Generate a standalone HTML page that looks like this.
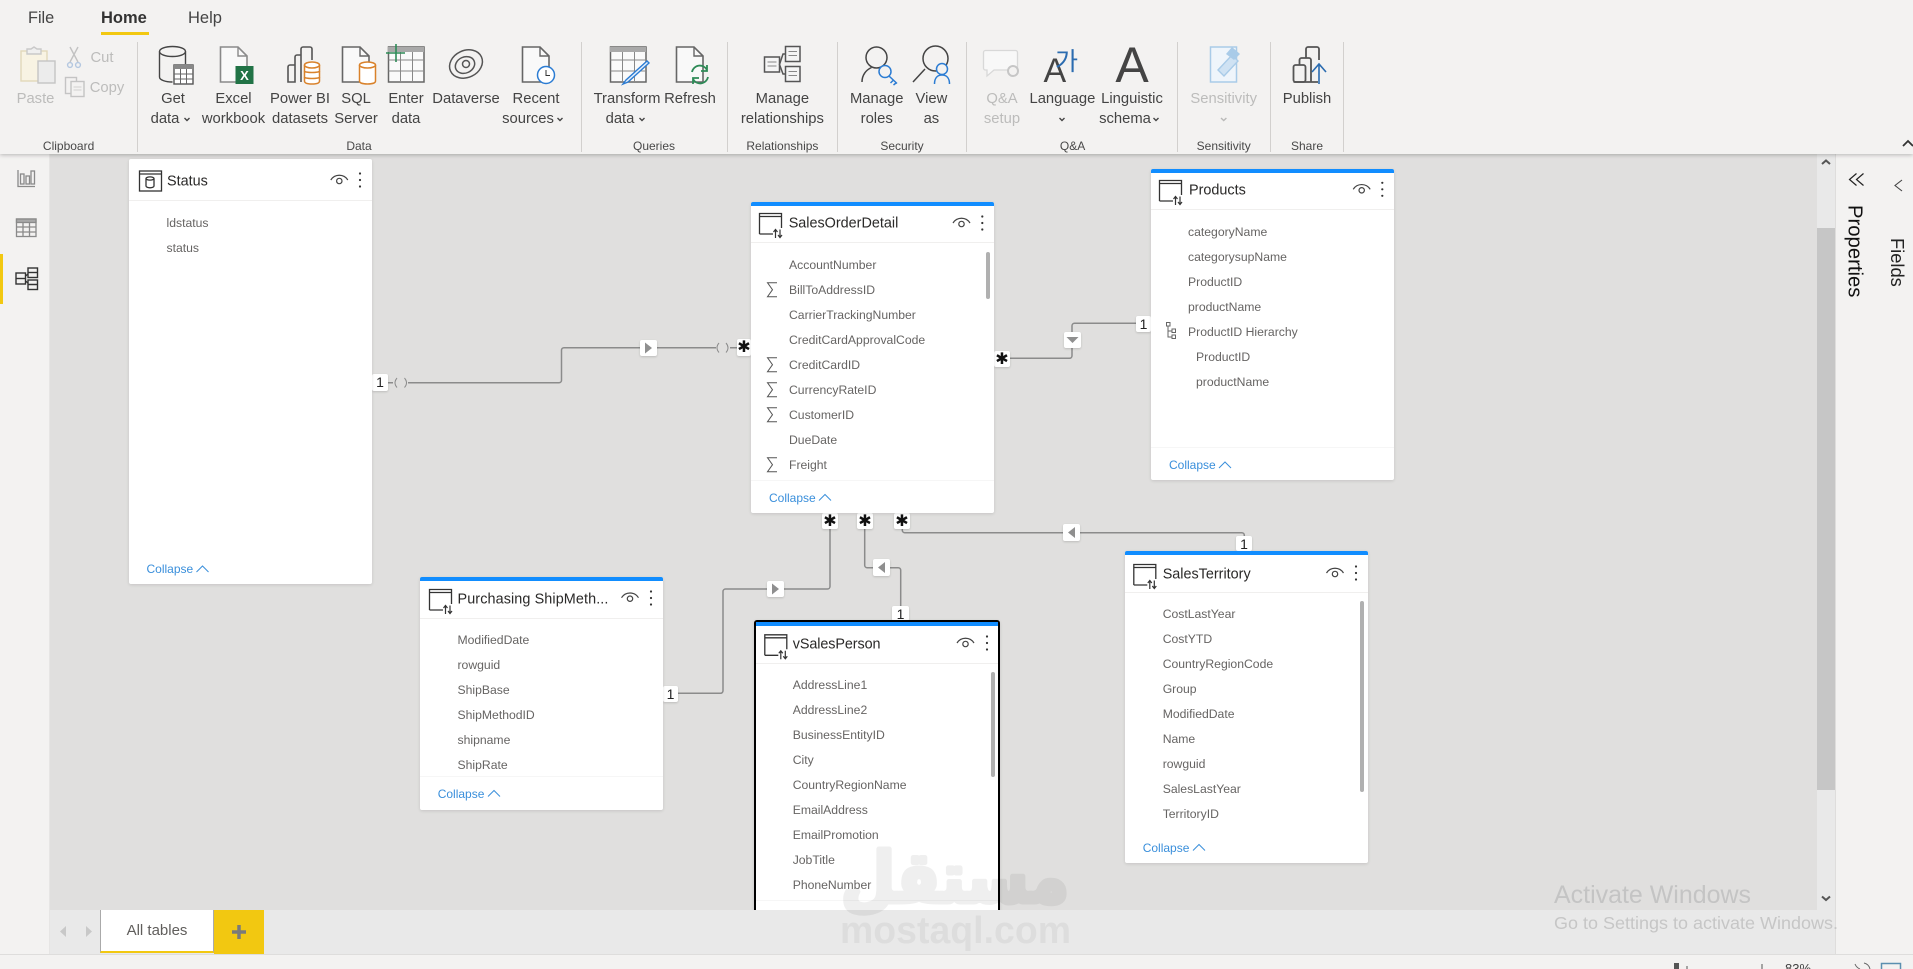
<!DOCTYPE html>
<html><head><meta charset="utf-8"><title>Power BI Model View</title>
<style>
html,body{margin:0;padding:0}
body{width:1913px;height:969px;overflow:hidden;position:relative;background:#f3f2f1;font-family:"Liberation Sans","Noto Sans CJK SC",sans-serif}
.abs,.l,.g,.t,.c,.r,.col,.ti,.b,.hr{position:absolute}
.l{transform:translate(-50%,1px);white-space:nowrap;font-size:14.8px;line-height:18px;color:#444}
.l.dis{color:#bcbcbb}
.g{transform:translateX(-50%);white-space:nowrap;font-size:12px;line-height:16px;top:137.5px;color:#484848}
.t{top:8px;font-size:16.3px;line-height:20px;color:#444}
.c{background:#fff;border-radius:2px;box-shadow:0 1px 3px rgba(0,0,0,.12);z-index:3}
.bt{position:absolute;left:0;right:0;top:0;height:4px;background:#118dff;border-radius:2px 2px 0 0}
.r{font-size:12.2px;line-height:25px;color:#666463;white-space:nowrap;z-index:4;transform:translateY(1px)}
.ti{font-size:14.4px;line-height:20px;color:#2a2928;white-space:nowrap;z-index:4;transform:translateY(.5px)}
.col{font-size:12px;line-height:16px;color:#3a8fdb;z-index:4}
.hr{height:1px;background:#f0efee;z-index:4}
.hr.ft{background:#f6f6f6}
.b{background:#fff;border-radius:2px;box-shadow:0 1px 2px rgba(0,0,0,.16);z-index:2;text-align:center;color:#222;font-size:14px;line-height:16px}
.s{font-family:"DejaVu Sans",sans-serif;font-size:16px;line-height:16px;color:#111}
svg{position:absolute;left:0;top:0;overflow:visible}
</style></head>
<body>
<!-- canvas -->
<div class="abs" style="left:50px;top:154px;width:1767px;height:756px;background:#e0dfde;z-index:1"></div>
<!-- ribbon -->
<div class="abs" style="left:0;top:0;width:1913px;height:154px;background:#f3f2f1;box-shadow:0 1px 4px rgba(0,0,0,.25);z-index:6">
<div class="t" style="left:28px">File</div>
<div class="t" style="left:101px;font-weight:bold;font-size:16.5px;color:#333">Home</div>
<div class="abs" style="left:101px;top:32px;width:48px;height:3px;background:#f2c811"></div>
<div class="t" style="left:188px;font-size:16.5px">Help</div>

<div class="l dis" style="left:35.5px;top:89px">Paste</div>
<div class="l dis" style="left:102px;top:48px">Cut</div>
<div class="l dis" style="left:107px;top:78px">Copy</div>
<div class="l" style="left:173px;top:89px">Get</div><div class="l" style="left:165px;top:109px">data</div>
<div class="l" style="left:233.5px;top:89px">Excel</div><div class="l" style="left:233.5px;top:109px">workbook</div>
<div class="l" style="left:300px;top:89px">Power BI</div><div class="l" style="left:300px;top:109px">datasets</div>
<div class="l" style="left:356px;top:89px">SQL</div><div class="l" style="left:356px;top:109px">Server</div>
<div class="l" style="left:406px;top:89px">Enter</div><div class="l" style="left:406px;top:109px">data</div>
<div class="l" style="left:466px;top:89px">Dataverse</div>
<div class="l" style="left:536px;top:89px">Recent</div><div class="l" style="left:528px;top:109px">sources</div>
<div class="l" style="left:627px;top:89px">Transform</div><div class="l" style="left:620px;top:109px">data</div>
<div class="l" style="left:690px;top:89px">Refresh</div>
<div class="l" style="left:782.4px;top:89px">Manage</div><div class="l" style="left:782.4px;top:109px">relationships</div>
<div class="l" style="left:876.7px;top:89px">Manage</div><div class="l" style="left:876.7px;top:109px">roles</div>
<div class="l" style="left:931.4px;top:89px">View</div><div class="l" style="left:931.4px;top:109px">as</div>
<div class="l dis" style="left:1002px;top:89px">Q&amp;A</div><div class="l dis" style="left:1002px;top:109px">setup</div>
<div class="l" style="left:1062.4px;top:89px">Language</div>
<div class="l" style="left:1132px;top:89px">Linguistic</div><div class="l" style="left:1125px;top:109px">schema</div>
<div class="l dis" style="left:1223.7px;top:89px">Sensitivity</div>
<div class="l" style="left:1307px;top:89px">Publish</div>

<div class="g" style="left:68.6px">Clipboard</div>
<div class="g" style="left:359px">Data</div>
<div class="g" style="left:654px">Queries</div>
<div class="g" style="left:782.4px">Relationships</div>
<div class="g" style="left:902px">Security</div>
<div class="g" style="left:1072.6px">Q&amp;A</div>
<div class="g" style="left:1223.7px">Sensitivity</div>
<div class="g" style="left:1307px">Share</div>

<svg width="1913" height="154" fill="none" stroke-width="1.4">
<!-- separators -->
<g stroke="#d2d0ce" stroke-width="1"><path d="M137.5 42V152M581.5 42V152M727.5 42V152M837.5 42V152M966.5 42V152M1177.5 42V152M1270.5 42V152M1343.5 42V152"/></g>
<!-- paste -->
<rect x="21" y="51" width="26" height="30" fill="#f8f3e3" stroke="#e2d8ba"/><path d="M27 52V49H31L34 47L37 49H41V54H27Z" fill="#efefef" stroke="#c9c9c9"/>
<rect x="38" y="61" width="17" height="22" fill="#ececec" stroke="#c4c4c4"/>
<path d="M70 47L78 62M78 47L70 62" stroke="#c2c2c2"/><circle cx="70" cy="65" r="2.4" stroke="#b4c7e0"/><circle cx="78" cy="65" r="2.4" stroke="#b4c7e0"/>
<rect x="65.5" y="77.5" width="11" height="16" stroke="#c4c4c4"/><rect x="71" y="81.5" width="13" height="15" fill="#f3f2f1" stroke="#c4c4c4"/><path d="M73.5 87H81.5M73.5 90H81.5" stroke="#d0d0d0" stroke-width="1"/>
<!-- get data -->
<g stroke="#444"><ellipse cx="172.5" cy="51.5" rx="13" ry="5"/><path d="M159.5 51.5V77c0 3 6 5 13 5M185.5 51.5V64"/></g>
<rect x="174" y="65" width="19" height="19" fill="#fff" stroke="#555"/><rect x="174" y="65" width="19" height="4" fill="#888"/><path d="M180.5 69V84M186.5 69V84M174 74H193M174 79H193" stroke="#666" stroke-width="1"/>
<!-- excel -->
<path d="M220.5 47H238L247 56V82H220.5Z" fill="#f9f9f9" stroke="#8a8a8a" stroke-width="1.6"/><path d="M238 47V56H247" stroke="#8a8a8a"/>
<rect x="235.5" y="66" width="18" height="18" fill="#217346"/><text x="244.5" y="80" text-anchor="middle" font-size="13" font-weight="bold" fill="#fff" stroke="none" font-family="Liberation Sans">X</text>
<!-- power bi datasets -->
<g stroke="#555" stroke-width="1.6"><path d="M288 82V67a2 2 0 0 1 2-2H295V82ZM295 82V57a2 2 0 0 1 2-2H301M301 82V49a2 2 0 0 1 2-2H310a2 2 0 0 1 2 2V60"/></g>
<g stroke="#d9822b" stroke-width="1.5" fill="#fff"><path d="M304.5 65V81c0 2 3 3 7.5 3s7.5-1 7.5-3V65"/><ellipse cx="312" cy="65" rx="7.5" ry="3"/><path d="M304.5 71c0 2 15 2 15 0M304.5 77c0 2 15 2 15 0" fill="none"/></g>
<!-- SQL -->
<path d="M342.5 47H360L369 56V82H342.5Z" fill="#f9f9f9" stroke="#666" stroke-width="1.6"/><path d="M360 47V56H369" stroke="#666"/>
<g stroke="#d9822b" stroke-width="1.5" fill="#fff"><path d="M359.5 65V81c0 2 3.500 3 8 3s8-1 8-3V65"/><ellipse cx="367.500" cy="65" rx="8" ry="3"/></g>
<!-- enter data -->
<rect x="388.500" y="47" width="35.500" height="35" fill="#fafafa" stroke="#666" stroke-width="1.500"/><rect x="388" y="47" width="36" height="5" fill="#a9a9a9"/><path d="M400.500 52V82M412.500 52V82M388.500 60H424M388.500 71H424" stroke="#888" stroke-width="1"/>
<path d="M386 53H405M396 44V62" stroke="#2e8b57" stroke-width="1.600"/>
<!-- dataverse -->
<g stroke="#555" stroke-width="1.500"><ellipse cx="466" cy="64" rx="17" ry="13.500" transform="rotate(-25 466 64)"/><ellipse cx="465" cy="65" rx="10" ry="8" transform="rotate(-25 465 65)"/><circle cx="466" cy="64" r="3.500"/></g>
<!-- recent -->
<path d="M522.500 47H540L549 56V82H522.500Z" fill="#f9f9f9" stroke="#666" stroke-width="1.600"/><path d="M540 47V56H549" stroke="#666"/>
<circle cx="546" cy="75" r="8.500" fill="#fff" stroke="#2b7cd3" stroke-width="1.500"/><path d="M546 70V75.500H550" stroke="#333" stroke-width="1"/>
<!-- transform -->
<rect x="610.500" y="47" width="35.500" height="35" fill="#fafafa" stroke="#666" stroke-width="1.500"/><rect x="610" y="47" width="36" height="5" fill="#a9a9a9"/><path d="M622.500 52V82M634.500 52V82M610.500 60H646M610.500 71H646" stroke="#888" stroke-width="1"/>
<path d="M647 61L626 80L623 84L628 82L649 63Z" fill="#e4effb" stroke="#2b7cd3" stroke-width="1.400"/>
<!-- refresh -->
<path d="M676.500 47H694L703 56V82H676.500Z" fill="#f9f9f9" stroke="#666" stroke-width="1.600"/><path d="M694 47V56H703" stroke="#666"/>
<g stroke="#2e8b57" stroke-width="1.800"><path d="M692 72A8 8 0 0 1 707 70M707 65V71H701M708 77A8 8 0 0 1 693 79M693 84V78H699"/></g>
<!-- manage relationships -->
<g stroke="#555" stroke-width="1.500" fill="#f5f5f5"><rect x="764.500" y="57" width="15" height="15"/><rect x="785.500" y="46.500" width="14.500" height="15"/><rect x="785.500" y="66.500" width="14.500" height="15"/></g>
<path d="M785 54H783L779.500 64.500L783 74H785" stroke="#555" stroke-width="1.500"/>
<path d="M767.500 62H776.500M767.500 66H776.500M788.500 51.500H797M788.500 55.500H797M788.500 71.500H797M788.500 75.500H797" stroke="#888" stroke-width="1"/>
<!-- manage roles -->
<g stroke="#444" stroke-width="1.500"><circle cx="876.500" cy="57.500" r="10.500"/><path d="M862 82C862 75 866 70 871.500 67.500M882 67L885 66"/></g>
<g stroke="#2b7cd3" stroke-width="1.500" fill="#f3f2f1"><circle cx="885" cy="71.500" r="6"/><path d="M889 76L897 83.500M893.500 80L890.500 83M896 83L893.500 85" fill="none"/></g>
<!-- view as -->
<g stroke="#444" stroke-width="1.500"><circle cx="935.500" cy="58.500" r="12.500"/><path d="M925 69L913 82"/></g>
<g stroke="#2b7cd3" stroke-width="1.500" fill="#f3f2f1"><circle cx="942" cy="69" r="5.500"/><path d="M934.500 84c0-6 3-9 7.500-9s7.500 3 7.500 9" fill="none"/></g>
<!-- q&a -->
<path d="M985.500 50.500H1015.500a2 2 0 0 1 2 2V70H994L987 76V70H985.500a2 2 0 0 1-2-2V52.500a2 2 0 0 1 2-2Z" fill="#f8f8f8" stroke="#d8d8d8" stroke-width="1.300"/>
<circle cx="1013" cy="71" r="5" fill="#f3f2f1" stroke="#c6c6c6" stroke-width="2"/>
<!-- language / linguistic -->
<text x="1043.500" y="82" font-size="34" fill="#444" stroke="none" font-family="Liberation Sans">A</text>
<text x="1055" y="70" font-size="25" fill="#2b6cb0" stroke="none" font-family="Noto Sans CJK KR">가</text>
<text x="1132" y="82" text-anchor="middle" font-size="50" fill="#444" stroke="none" font-family="Liberation Sans">A</text>
<!-- sensitivity -->
<rect x="1210.500" y="47" width="26" height="35" fill="#eff5fb" stroke="#a9cbe8" stroke-width="1.500"/>
<path d="M1218 70L1232 55L1238 61L1224 76Z" fill="#cfe2f3" stroke="#a9cbe8"/><path d="M1226 54L1232 47L1240 54L1234 60Z" fill="#a9cbe8"/>
<!-- publish -->
<g stroke="#555" stroke-width="1.800"><rect x="1293.500" y="65" width="12" height="17" rx="2"/><path d="M1299.500 65V60a2 2 0 0 1 2-2H1309a2 2 0 0 1 2 2V82M1306 58V49a2 2 0 0 1 2-2H1317a2 2 0 0 1 2 2V60M1293.500 82H1318"/></g>
<path d="M1319 84V64M1312 72L1319 64L1326 72" stroke="#2b6cb0" stroke-width="1.600"/>
<!-- carets -->
<g stroke="#444" stroke-width="1.400"><path d="M184.500 118L187 120.500L189.500 118M557.500 118L560 120.500L562.500 118M639.500 118L642 120.500L644.500 118M1059.500 118L1062 120.500L1064.500 118M1153.500 118L1156 120.500L1158.500 118"/></g>
<path d="M1221 118L1223.700 120.500L1226.400 118" stroke="#b9b9b8" stroke-width="1.400"/>
<path d="M1903 146L1908 141L1913 146" stroke="#333" stroke-width="1.800"/>
</svg>
</div>

<!-- left rail -->
<div class="abs" style="left:0;top:154px;width:50px;height:815px;background:#f3f2f1;border-right:1px solid #e6e5e4;box-sizing:border-box;z-index:1"></div>
<div class="abs" style="left:0;top:254px;width:3px;height:50px;background:#f2c811;z-index:2"></div>
<svg width="60" height="320" fill="none" style="z-index:2">
<g stroke="#8a8a8a" stroke-width="1.300"><path d="M18 170V186.500H35"/><rect x="20.500" y="174" width="3.500" height="10"/><rect x="26" y="176" width="3.500" height="8"/><rect x="31" y="171" width="3.500" height="13"/></g>
<g stroke="#8a8a8a" stroke-width="1.300"><rect x="16.500" y="219" width="19.500" height="17.500"/><rect x="16.500" y="219" width="19.500" height="3.500" fill="#a8a8a8"/><path d="M23 222V236M29.500 222V236M16.500 227H36M16.500 232H36"/></g>
<g stroke="#333" stroke-width="1.400"><rect x="16" y="273" width="9.500" height="11"/><path d="M16 278.500H25.500"/><rect x="28" y="268" width="9.500" height="9.500"/><path d="M28 272.500H37.500"/><rect x="28" y="280" width="9.500" height="9.500"/><path d="M28 284.500H37.500M25.500 276L28 274M25.500 281L28 283"/></g>
</svg>

<!-- connectors -->
<svg width="1913" height="969" fill="none" style="z-index:2">
<g stroke="#8b8b8b" stroke-width="1.500">
<path d="M408 382.700H559a2.500 2.500 0 0 0 2.500-2.500V350.200a2.500 2.500 0 0 1 2.500-2.500H716"/>
<path d="M730 347.700H737M388 382.700H393"/>
<path d="M1010 358.300H1069.500a2.500 2.500 0 0 0 2.500-2.500V325.800a2.500 2.500 0 0 1 2.500-2.500H1136"/>
<path d="M830 529V586.500a2.500 2.500 0 0 1-2.500 2.500H725.500a2.500 2.500 0 0 0-2.500 2.500V690.800a2.500 2.500 0 0 1-2.500 2.500H678"/>
<path d="M864.700 529V565.200a2.500 2.500 0 0 0 2.500 2.500H898.200a2.500 2.500 0 0 1 2.500 2.500V606"/>
<path d="M902.300 529V530.200a2.500 2.500 0 0 0 2.500 2.500H1241.800a2.500 2.500 0 0 1 2.500 2.500V537"/>
</g>
<g stroke="#8b8b8b" stroke-width="1"><path d="M397 378Q393 382.700 397 387.500M404.500 378Q408.500 382.700 404.500 387.500M719 343Q715 347.700 719 352.500M726 343Q730 347.700 726 352.500"/></g>
</svg>
<div class="b" style="left:372px;top:374px;width:16px;height:17px">1</div>
<div class="b" style="left:1136px;top:316px;width:15px;height:16px">1</div>
<div class="b" style="left:663px;top:686px;width:15px;height:16px">1</div>
<div class="b" style="left:892px;top:606px;width:17px;height:15px">1</div>
<div class="b" style="left:1236px;top:536px;width:16px;height:15px">1</div>
<div class="b s" style="left:737px;top:339px;width:14px;height:17px">✱</div>
<div class="b s" style="left:994px;top:351px;width:16px;height:16px">✱</div>
<div class="b s" style="left:822px;top:513px;width:16px;height:16px">✱</div>
<div class="b s" style="left:857px;top:513px;width:16px;height:16px">✱</div>
<div class="b s" style="left:894px;top:513px;width:16px;height:16px">✱</div>
<div class="b" style="left:640px;top:340px;width:17px;height:16px"></div>
<div class="b" style="left:1064px;top:332px;width:17px;height:16px"></div>
<div class="b" style="left:767px;top:581px;width:17px;height:16px"></div>
<div class="b" style="left:873px;top:559px;width:17px;height:17px"></div>
<div class="b" style="left:1063px;top:524px;width:17px;height:17px"></div>
<svg width="1913" height="969" style="z-index:2">
<g fill="#8f8f8f"><path d="M645 342.500L652 348L645 353.500ZM1066.500 337H1078.500L1072.500 343ZM772 583.500L779 589L772 594.500ZM885 562L878 567.500L885 573ZM1075 527L1068 532.500L1075 538Z"/></g>
</svg>

<!-- Status -->
<div class="c" style="left:129px;top:159px;width:243px;height:425px"></div>
<div class="hr" style="left:129px;top:200px;width:243px"></div>
<div class="ti" style="left:167px;top:171px">Status</div>
<div class="r" style="left:166.500px;top:210px">ldstatus<br>status</div>
<div class="col" style="left:146.500px;top:561px">Collapse</div>

<!-- SalesOrderDetail -->
<div class="c" style="left:751px;top:202px;width:243px;height:311px"><div class="bt"></div></div>
<div class="hr" style="left:751px;top:242px;width:243px"></div>
<div class="hr ft" style="left:751px;top:480px;width:243px"></div>
<div class="ti" style="left:788.700px;top:213px">SalesOrderDetail</div>
<div class="r" style="left:789px;top:252px">AccountNumber<br>BillToAddressID<br>CarrierTrackingNumber<br>CreditCardApprovalCode<br>CreditCardID<br>CurrencyRateID<br>CustomerID<br>DueDate<br>Freight</div>
<div class="col" style="left:769px;top:490px">Collapse</div>
<div class="abs" style="left:986px;top:252px;width:4px;height:47px;background:#b0b0b0;border-radius:2px;z-index:4"></div>

<!-- Products -->
<div class="c" style="left:1151px;top:169px;width:243px;height:311px"><div class="bt"></div></div>
<div class="hr" style="left:1151px;top:209px;width:243px"></div>
<div class="hr ft" style="left:1151px;top:447px;width:243px"></div>
<div class="ti" style="left:1189px;top:179.500px">Products</div>
<div class="r" style="left:1188px;top:219px">categoryName<br>categorysupName<br>ProductID<br>productName<br>ProductID Hierarchy</div>
<div class="r" style="left:1196px;top:344px">ProductID<br>productName</div>
<div class="col" style="left:1169px;top:457px">Collapse</div>

<!-- Purchasing -->
<div class="c" style="left:420px;top:577px;width:243px;height:233px"><div class="bt"></div></div>
<div class="hr" style="left:420px;top:618px;width:243px"></div>
<div class="hr ft" style="left:420px;top:776px;width:243px"></div>
<div class="ti" style="left:457.500px;top:589px;letter-spacing:.1px">Purchasing ShipMeth...</div>
<div class="r" style="left:457.500px;top:627px">ModifiedDate<br>rowguid<br>ShipBase<br>ShipMethodID<br>shipname<br>ShipRate</div>
<div class="col" style="left:437.700px;top:786px">Collapse</div>

<!-- vSalesPerson -->
<div class="c" style="left:754px;top:620px;width:242px;height:320px;border:2px solid #000;border-bottom:0;border-radius:3px 3px 0 0"><div class="bt" style="border-radius:0"></div></div>
<div class="hr" style="left:756px;top:663px;width:242px"></div>
<div class="hr ft" style="left:756px;top:900px;width:242px"></div>
<div class="ti" style="left:792.800px;top:634px;letter-spacing:-.1px">vSalesPerson</div>
<div class="r" style="left:792.700px;top:672px">AddressLine1<br>AddressLine2<br>BusinessEntityID<br>City<br>CountryRegionName<br>EmailAddress<br>EmailPromotion<br>JobTitle<br>PhoneNumber</div>
<div class="abs" style="left:991px;top:672px;width:4px;height:105px;background:#b0b0b0;border-radius:2px;z-index:4"></div>

<!-- SalesTerritory -->
<div class="c" style="left:1125px;top:551px;width:243px;height:312px"><div class="bt"></div></div>
<div class="hr" style="left:1125px;top:592px;width:243px"></div>
<div class="ti" style="left:1162.700px;top:564px">SalesTerritory</div>
<div class="r" style="left:1162.700px;top:601px">CostLastYear<br>CostYTD<br>CountryRegionCode<br>Group<br>ModifiedDate<br>Name<br>rowguid<br>SalesLastYear<br>TerritoryID</div>
<div class="col" style="left:1142.700px;top:840px">Collapse</div>
<div class="abs" style="left:1360px;top:601px;width:4px;height:191px;background:#b0b0b0;border-radius:2px;z-index:4"></div>

<!-- card icons overlay -->
<svg width="1913" height="969" fill="none" style="z-index:4">
<defs>
<g id="tb" stroke="#333" stroke-width="1.300"><path d="M.5 21V.5H22.500V15M.5 3.500H22.500M.5 21H14"/><path d="M16.500 25V17M14.500 19L16.500 16.500L18.500 19M21 16.500V24.500M19 22L21 24.500L23 22" stroke-width="1.200"/></g>
<g id="eye" stroke="#444" stroke-width="1.200"><path d="M-8.500 0A10 10 0 0 1 8.500 0"/><circle cx="0" cy="1" r="2.700"/></g>
<g id="dots" fill="#333" stroke="none"><circle cx="0" cy="-6.500" r="1.100"/><circle cx="0" cy="0" r="1.100"/><circle cx="0" cy="6.500" r="1.100"/></g>
<path id="ch" d="M-6 3L0-3L6 3" stroke="#3a8fdb" stroke-width="1"/>
<path id="sig" d="M10.500-7H1L6 0L1 7H10.500" stroke="#555" stroke-width="1"/>
</defs>
<g stroke="#333" stroke-width="1.300"><rect x="139.500" y="171" width="22" height="20"/><path d="M139.500 174H161.500"/><ellipse cx="150" cy="178.500" rx="4" ry="1.600"/><path d="M146 178.500V186c0 1 1.800 1.800 4 1.800s4-.8 4-1.800V178.500"/></g>
<use href="#tb" x="759" y="213"/><use href="#tb" x="1159" y="180"/><use href="#tb" x="429" y="589"/><use href="#tb" x="764.300" y="634.300"/><use href="#tb" x="1133.300" y="564"/>
<use href="#eye" x="339.300" y="180"/><use href="#dots" x="360" y="180"/>
<use href="#eye" x="961.500" y="223"/><use href="#dots" x="982.300" y="223"/>
<use href="#eye" x="1361.700" y="189.300"/><use href="#dots" x="1382.300" y="189.300"/>
<use href="#eye" x="630" y="597.700"/><use href="#dots" x="651" y="598"/>
<use href="#eye" x="965.500" y="643"/><use href="#dots" x="987" y="643"/>
<use href="#eye" x="1335" y="573"/><use href="#dots" x="1356" y="573"/>
<use href="#ch" x="202.500" y="569"/><use href="#ch" x="825" y="497.500"/><use href="#ch" x="1225" y="465"/><use href="#ch" x="494" y="793.500"/><use href="#ch" x="1199" y="847.500"/>
<use href="#sig" x="766.500" y="289.700"/><use href="#sig" x="766.500" y="364.700"/><use href="#sig" x="766.500" y="389.700"/><use href="#sig" x="766.500" y="414.700"/><use href="#sig" x="766.500" y="464.700"/>
<g stroke="#666" stroke-width="1"><rect x="1166.500" y="322.500" width="3.500" height="3.500"/><rect x="1172" y="329" width="3.500" height="3.500"/><rect x="1172" y="335" width="3.500" height="3.500"/><path d="M1168 326V337H1172M1168 331H1172"/></g>
</svg>

<!-- scrollbar -->
<div class="abs" style="left:1817px;top:154px;width:18px;height:756px;background:#e9e9e9;z-index:1"></div>
<div class="abs" style="left:1817px;top:228px;width:18px;height:562px;background:#c6c6c6;z-index:1"></div>

<!-- tabs bar -->
<div class="abs" style="left:50px;top:910px;width:1786px;height:44px;background:#e9e9e9;z-index:5"></div>
<div class="abs" style="left:100px;top:910px;width:114px;height:43px;background:#fff;border-left:1px solid #aaa;border-right:1px solid #aaa;box-sizing:border-box;border-bottom:2px solid #f2c811;z-index:5;text-align:center;font-size:15px;line-height:42px;color:#605e5c">All tables</div>
<div class="abs" style="left:214px;top:910px;width:50px;height:44px;background:#f2c811;z-index:5"></div>
<div class="abs" style="left:0;top:954px;width:1913px;height:15px;background:#f3f2f1;border-top:1px solid #dedddc;box-sizing:border-box;z-index:5"></div>

<!-- right panes -->
<div class="abs" style="left:1835px;top:154px;width:43px;height:800px;background:#f3f2f1;border-left:1px solid #dedddc;border-right:1px solid #dedddc;z-index:5"></div>
<div class="abs" style="left:1879px;top:154px;width:34px;height:800px;background:#f3f2f1;z-index:5"></div>
<div class="abs" style="left:1844.500px;top:205px;writing-mode:vertical-rl;font-size:20.300px;line-height:20px;color:#111;white-space:nowrap;z-index:6">Properties</div>
<div class="abs" style="left:1887px;top:238px;writing-mode:vertical-rl;font-size:18.300px;line-height:20px;color:#222;white-space:nowrap;z-index:6">Fields</div>

<svg width="1913" height="969" fill="none" style="z-index:6">
<path d="M1856.500 173.500L1849.500 179.500L1856.500 185.500M1863.500 173.500L1856.500 179.500L1863.500 185.500" stroke="#222" stroke-width="1.200"/>
<path d="M1902 180L1895 185.500L1902 191" stroke="#444" stroke-width="1.100"/>
<path d="M1822 164L1826 160.500L1830 164M1822 896.500L1826 900L1830 896.500" stroke="#555" stroke-width="2"/>
<path d="M66 926L60 931.500L66 937Z" fill="#c8c8c8"/><path d="M86 926L92 931.500L86 937Z" fill="#c8c8c8"/>
<path d="M239 925V939M232 932H246" stroke="#7a7a7a" stroke-width="3.500"/>
<!-- status bar peeks -->
<rect x="1674" y="963" width="5" height="6" fill="#555"/>
<path d="M1687 966V969M1762 964V969" stroke="#555"/>
<path d="M1860 969A9 9 0 0 1 1855 964M1864 963A8 8 0 0 1 1870 969" stroke="#666"/>
<path d="M1881.500 969V963.500H1900.500V969" stroke="#5b8fb0" stroke-width="1.500"/>
<text x="1785" y="973" font-size="13" fill="#444" stroke="none" font-family="Liberation Sans">83%</text>
<!-- activate windows -->
<text x="1554" y="903" font-size="25" fill="#c4c4c4" stroke="none" font-family="Liberation Sans" textLength="197" lengthAdjust="spacingAndGlyphs">Activate Windows</text>
<text x="1554" y="929" font-size="17.500" fill="#c6c6c6" stroke="none" font-family="Liberation Sans" textLength="284" lengthAdjust="spacingAndGlyphs">Go to Settings to activate Windows.</text>
<!-- watermark -->
<text x="841" y="902" font-size="70" font-weight="bold" fill="#000" stroke="#000" stroke-width="5" stroke-linejoin="round" opacity=".06" font-family="DejaVu Sans" textLength="228" lengthAdjust="spacingAndGlyphs">مستقل</text>
<text x="840" y="943" font-size="38" font-weight="bold" fill="rgba(0,0,0,.05)" stroke="none" font-family="Liberation Sans" textLength="231" lengthAdjust="spacingAndGlyphs">mostaql.com</text>
</svg>
</body></html>
